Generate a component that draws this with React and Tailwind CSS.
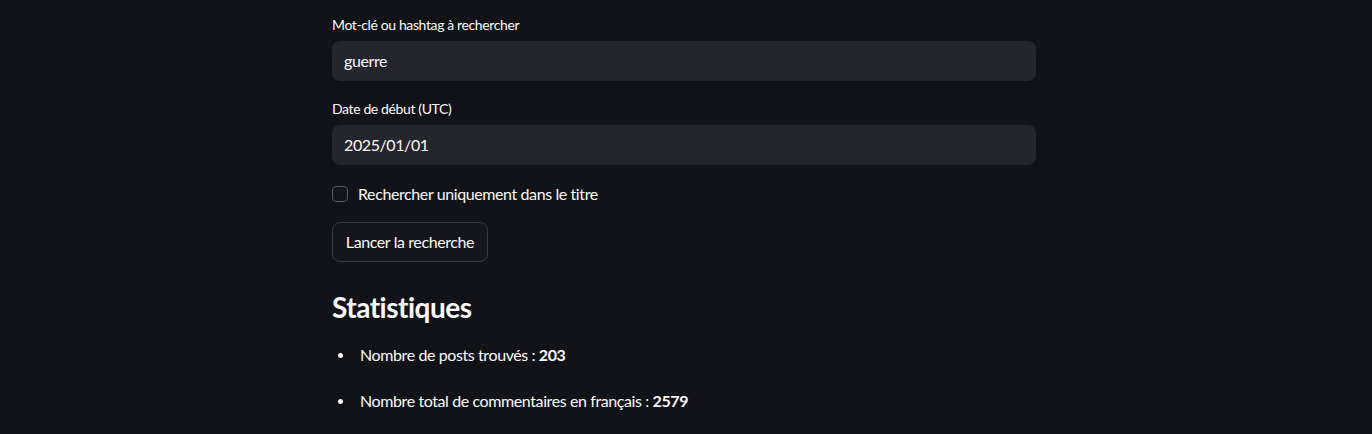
export default function App() {
  return (
    <div className="min-h-[434px] w-full bg-[#121318] pr-1 text-[#fafafa]" style={{ fontFamily: 'Lato, "Noto Sans", sans-serif' }}>
      <div className="mx-auto w-[704px] pt-[13px]">
        <div className="flex flex-col">
          <label className="h-6 text-[14px] leading-6 tracking-[-0.38px]">Mot-clé ou hashtag à rechercher</label>
          <div className="mt-1 flex h-10 items-center rounded-lg bg-[#24252d] px-3 text-[16px] tracking-[-0.4px]">guerre</div>

          <label className="mt-4 h-6 text-[14px] leading-6 tracking-[-0.38px]">Date de début (UTC)</label>
          <div className="mt-1 flex h-10 items-center rounded-lg bg-[#24252d] px-3 text-[16px] tracking-[-0.4px]">2025/01/01</div>

          <div className="mt-[17px] flex h-6 items-center gap-[10px]">
            <span className="h-4 w-4 rounded border border-[#5a5b62] bg-[#15161b]" />
            <span className="text-[16px] tracking-[-0.4px]">Rechercher uniquement dans le titre</span>
          </div>

          <div className="mt-4">
            <button className="flex h-10 w-[156px] items-center justify-center rounded-lg border border-[#3a3b42] bg-[#15161c] text-[16px] tracking-[-0.4px] text-[#fafafa]">
              Lancer la recherche
            </button>
          </div>

          <h3 className="mt-7 text-[28px] font-bold leading-[34px] tracking-[-0.5px]">Statistiques</h3>

          <ul className="mt-[19px] flex flex-col gap-[22px] text-[16px] tracking-[-0.4px]">
            <li className="flex h-6 items-center">
              <span className="ml-[6px] h-[5px] w-[5px] rounded-full bg-[#fafafa]" />
              <span className="ml-[17px]">Nombre de posts trouvés : <b>203</b></span>
            </li>
            <li className="flex h-6 items-center">
              <span className="ml-[6px] h-[5px] w-[5px] rounded-full bg-[#fafafa]" />
              <span className="ml-[17px]">Nombre total de commentaires en français : <b>2579</b></span>
            </li>
          </ul>
        </div>
      </div>
    </div>
  );
}
